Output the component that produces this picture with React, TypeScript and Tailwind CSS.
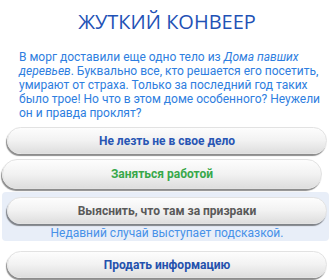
import React from "react"

const btn =
  "flex h-[27px] w-full items-center justify-center rounded-full border border-[#e2e2e2] bg-gradient-to-b from-[#fdfdfd] via-[#f2f2f2] to-[#dedede] text-[12px] font-bold shadow-[-1px_2px_1px_rgba(0,0,0,0.45)]"

export default function App() {
  return (
    <div className="h-[280px] w-[334px] overflow-hidden bg-white" style={{ fontFamily: "Roboto, 'Liberation Sans', sans-serif" }}>
      {/* Title */}
      <h1
        className="pt-[9px] text-center text-[20px] font-medium leading-[26px] text-[#1f52b6]"
        style={{ fontFamily: "'Open Sans', sans-serif" }}
      >
        ЖУТКИЙ КОНВЕЕР
      </h1>

      {/* Story */}
      <p className="mt-[15px] whitespace-nowrap pl-[19px] text-[12px] leading-[14px] text-[#2e7ee0]">
        В морг доставили еще одно тело из <i>Дома павших</i>
        <br />
        <i>деревьев</i>. Буквально все, кто решается его посетить,
        <br />
        умирают от страха. Только за последний год таких
        <br />
        было трое! Но что в этом доме особенного? Неужели
        <br />
        он и правда проклят?
      </p>

      {/* Choices */}
      <div className="mt-[7px] flex flex-col px-[7px]">
        <button className={`${btn} text-[#2856b4]`}>Не лезть не в свое дело</button>

        <button className={`${btn} -mx-[5px] mt-[5px] h-[30px] w-auto text-[#38a84a]`}>Заняться работой</button>

        <div className="mt-[3px] ml-[-5px] mr-[-2px] rounded-[4px] bg-[#e8eef8] pl-[5px] pr-[2px] pt-[5px]">
          <button className={`${btn} text-[#595959]`}>Выяснить, что там за призраки</button>
          <p className="mt-[2px] text-center text-[12px] leading-[15px] text-[#4791e8]">
            Недавний случай выступает подсказкой.
          </p>
        </div>

        <button className={`${btn} mt-[10px] text-[#2451ad]`}>Продать информацию</button>
      </div>
    </div>
  )
}
